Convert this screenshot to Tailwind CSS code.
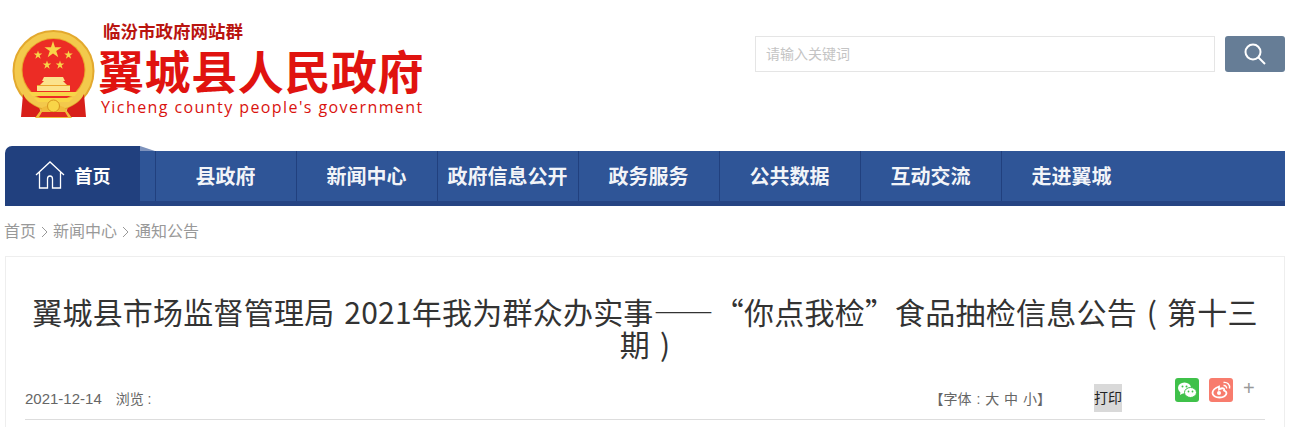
<!DOCTYPE html>
<html lang="zh-CN">
<head>
    <meta charset="UTF-8">
    <title>翼城县人民政府</title>
    <script src="https://cdn.jsdelivr.net/npm/@tailwindcss/browser@4"></script>
</head>
<body class="bg-white h-[427px] overflow-hidden font-['Liberation_Sans','Noto_Sans_CJK_SC',sans-serif] text-[#333]">
    <div class="w-[1280px] ml-[5px]">
        <!-- 头部 -->
        <header class="h-[146px] flex justify-between">
            <div class="flex items-start pt-[20px] pl-[6px]">
                <!-- 国徽 -->
                <svg class="w-[84px] h-[90px] mt-[10px]" viewBox="0 0 84 90">
                    <circle cx="42.500" cy="41" r="40" fill="#f3c94c" stroke="#e3a92e" stroke-width="2"/>
                    <circle cx="42.500" cy="40" r="32" fill="#e9a62c"/>
                    <circle cx="42.500" cy="40" r="31" fill="#ec2c25"/>
                    <g fill="#f8d548">
                        <polygon points="0,-1 .225,-.31 .95,-.31 .36,.12 .59,.81 0,.38 -.59,.81 -.36,.12 -.95,-.31 -.225,-.31" transform="translate(42 20) scale(9)"/>
                        <polygon points="0,-1 .225,-.31 .95,-.31 .36,.12 .59,.81 0,.38 -.59,.81 -.36,.12 -.95,-.31 -.225,-.31" transform="translate(27 25) scale(4.500)"/>
                        <polygon points="0,-1 .225,-.31 .95,-.31 .36,.12 .59,.81 0,.38 -.59,.81 -.36,.12 -.95,-.31 -.225,-.31" transform="translate(57.500 25) scale(4.500)"/>
                        <polygon points="0,-1 .225,-.31 .95,-.31 .36,.12 .59,.81 0,.38 -.59,.81 -.36,.12 -.95,-.31 -.225,-.31" transform="translate(36 35) scale(4.500)"/>
                        <polygon points="0,-1 .225,-.31 .95,-.31 .36,.12 .59,.81 0,.38 -.59,.81 -.36,.12 -.95,-.31 -.225,-.31" transform="translate(49 35) scale(4.500)"/>
                    </g>
                    <path d="M33 47h19l2 4h-2l4 4h3v6H26v-6h3l4-4h-2z" fill="#fbe38c"/>
                    <path d="M26 55h33v1H26z" fill="#e9a62c"/>
                    <path d="M18 62h49l-3 4H21z" fill="#f8d548"/>
                    <path d="M23 68h39l-4 4H27z" fill="#f8d548"/>
                    <path d="M12 64c3 7 9 11 16 14l5 9H10z" fill="#d81f1a"/>
                    <path d="M73 64c-3 7-9 11-16 14l-5 9h23z" fill="#d81f1a"/>
                    <path d="M24 88l8-11c4 0 6-4 10.500-6 4.500 2 6.500 6 10.500 6l8 11z" fill="#f0bb3c"/>
                    <circle cx="42.500" cy="76" r="6" fill="#f8d548" stroke="#d8951f"/>
                    <path d="M31 82h23l3 5H28z" fill="#e02a20"/>
                </svg>
                <div class="ml-[1px]">
                    <p class="text-[17.500px] leading-[24px] font-bold text-[#b9140f] pl-[7px] whitespace-nowrap">临汾市政府网站群</p>
                    <p class="mt-[4px] text-[46px] leading-[50px] font-bold text-[#e0130f] tracking-[0.6px] pl-[2px] whitespace-nowrap">翼城县人民政府</p>
                    <p class="text-[16px] leading-[18px] text-[#d9120e] tracking-[1.420px] pl-[5px] font-['Open_Sans'] whitespace-nowrap">Yicheng county people's government</p>
                </div>
            </div>
            <div class="flex gap-[10px] pt-[36px]">
                <input type="text" placeholder="请输入关键词" class="w-[460px] h-[36px] border border-[#e5e5e5] px-[10px] text-[14px] placeholder:text-[#c4c4c4] outline-none">
                <button class="w-[60px] h-[36px] bg-[#667d96] rounded-[3px] flex items-center justify-center">
                    <svg class="w-[26px] h-[26px]" viewBox="0 0 26 26" fill="none" stroke="white" stroke-width="2"><circle cx="11" cy="11" r="7.500"/><path d="M16.500 16.500L23 23"/></svg>
                </button>
            </div>
        </header>

        <!-- 导航 -->
        <nav class="h-[60px] flex items-end">
            <div class="w-[135px] h-[60px] bg-[#21407e] rounded-tl-[7px] flex items-center justify-center gap-[10px]">
                <svg class="w-[30px] h-[28px] mb-[2px]" viewBox="0 0 30 28" fill="none" stroke="white" stroke-width="1.300"><path d="M1 14L15 1l14 13M4.500 11v16h8V18c0-4 5-4 5 0v9h8V11"/></svg>
                <span class="text-[18px] font-bold text-white mt-[2px]">首页</span>
            </div>
            <div class="flex-1 h-[55px] border-b-[5px] border-[#254483] bg-[#2f5597] flex">
                <div class="relative w-[15px] shrink-0">
                    <span class="absolute left-0 -top-[5px] border-b-[5px] border-r-[15px] border-b-[#7d92bc] border-r-transparent"></span>
                </div>
                <a class="w-[141px] border-l border-[#21407e] flex items-center justify-center pt-[1px] pr-[1px] text-[20px] font-bold text-white/95">县政府</a>
                <a class="w-[141px] border-l border-[#21407e] flex items-center justify-center pt-[1px] pr-[1px] text-[20px] font-bold text-white/95">新闻中心</a>
                <a class="w-[141px] border-l border-[#21407e] flex items-center justify-center pt-[1px] pr-[1px] text-[20px] font-bold text-white/95">政府信息公开</a>
                <a class="w-[141px] border-l border-[#21407e] flex items-center justify-center pt-[1px] pr-[1px] text-[20px] font-bold text-white/95">政务服务</a>
                <a class="w-[141px] border-l border-[#21407e] flex items-center justify-center pt-[1px] pr-[1px] text-[20px] font-bold text-white/95">公共数据</a>
                <a class="w-[141px] border-l border-[#21407e] flex items-center justify-center pt-[1px] pr-[1px] text-[20px] font-bold text-white/95">互动交流</a>
                <a class="w-[141px] border-l border-[#21407e] flex items-center justify-center pt-[1px] pr-[1px] text-[20px] font-bold text-white/95">走进翼城</a>
            </div>
        </nav>

        <!-- 面包屑 -->
        <div class="h-[50px] flex items-center gap-[5px] pt-[2px] text-[16px] text-[#999]">
            <span class="-ml-[1px]">首页</span>
            <svg class="w-[7px] h-[12px]" viewBox="0 0 7 12" fill="none" stroke="#999"><path d="M1 1l5 5-5 5"/></svg>
            <span>新闻中心</span>
            <svg class="w-[7px] h-[12px]" viewBox="0 0 7 12" fill="none" stroke="#999"><path d="M1 1l5 5-5 5"/></svg>
            <span class="ml-[1px]">通知公告</span>
        </div>

        <!-- 正文 -->
        <main class="border border-b-0 border-[#eee] px-[19px] h-[171px]">
            <h1 class="pt-[38px] text-[30px] leading-[32px] text-center text-[#333] font-['Noto_Sans_CJK_SC'] [word-spacing:3px] tracking-[0.22px]">翼城县市场监督管理局 2021年我为群众办实事——“你点我检”食品抽检信息公告 ( 第十三期 )</h1>
            <div class="relative h-[53px] mt-[8px] border-b border-[#ddd] text-[14px] text-[#666] flex items-center pt-[12px]">
                <span class="text-[15px]">2021-12-14</span>
                <span class="ml-[14px]">浏览 :</span>
                <span class="ml-auto [word-spacing:1px]">【字体 : 大 中 小】</span>
                <span class="ml-[43px] mr-[143px] w-[28px] h-[28px] bg-[#d9d9d9] text-[#222] text-[14px] flex items-center justify-center -mt-[2px]">打印</span>
                <div class="absolute right-0 top-[11px] flex items-start w-[90px] gap-[10px]">
                    <span class="w-[24px] h-[24px] rounded-[3px] bg-[#3fc14a] flex items-center justify-center">
                        <svg class="w-[20px] h-[20px]" viewBox="0 0 20 20">
                            <ellipse cx="7.500" cy="8" rx="6.500" ry="5.500" fill="white"/>
                            <path d="M3.500 12l-.5 3 3.500-2z" fill="white"/>
                            <ellipse cx="13.500" cy="12.500" rx="6" ry="5" fill="white" stroke="#3fc14a"/>
                            <circle cx="5.500" cy="6.500" r="1" fill="#3fc14a"/><circle cx="9.500" cy="6.500" r="1" fill="#3fc14a"/>
                            <circle cx="11.500" cy="11.500" r=".9" fill="#3fc14a"/><circle cx="15.500" cy="11.500" r=".9" fill="#3fc14a"/>
                        </svg>
                    </span>
                    <span class="w-[24px] h-[24px] rounded-[3px] bg-[#f87c6d] flex items-center justify-center">
                        <svg class="w-[20px] h-[20px]" viewBox="0 0 20 20" fill="none" stroke="white">
                            <path d="M8 6.500C4 8 1.500 10.500 1.500 13c0 2.500 3 4.500 7 4.500s7-2 7-4.500c0-1.500-1.500-2-2.500-2.500 1-2.500-1.500-3-5-1z" stroke-width="1.800"/>
                            <circle cx="8" cy="13" r="2" fill="white" stroke="none"/>
                            <path d="M12.500 2.500a5 5 0 0 1 6 6M12.500 5.500a2.500 2.500 0 0 1 3 3" stroke-width="1.400"/>
                        </svg>
                    </span>
                    <span class="text-[20px] leading-[20px] text-[#999]">+</span>
                </div>
            </div>
        </main>
    </div>
</body>
</html>
